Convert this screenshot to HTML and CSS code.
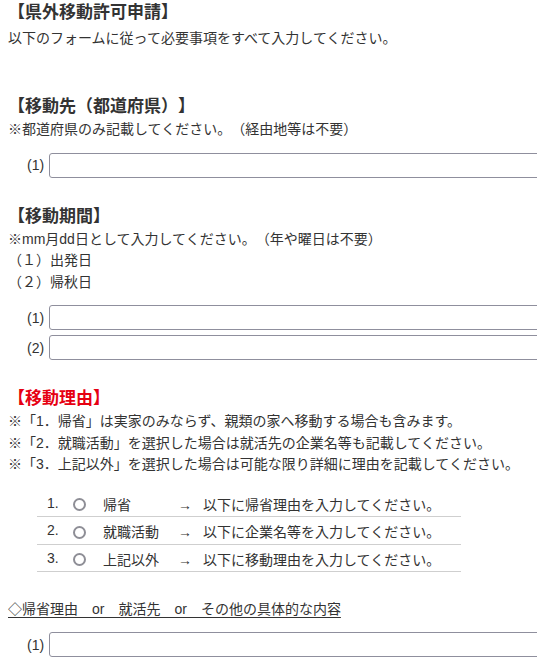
FILE: index.html
```html
<!DOCTYPE html>
<html lang="ja">
<head>
  <meta charset="UTF-8" />
  <meta name="viewport" content="width=device-width, initial-scale=1.0"/>
  <title>県外移動許可申請</title>
  <link rel="stylesheet" href="styles.css">
</head>
<body>
  <h1 class="title">【県外移動許可申請】</h1>
  <p class="lead">以下のフォームに従って必要事項をすべて入力してください。</p>

  <!-- 移動先 -->
  <section class="block block-dest">
    <h2 class="heading">【移動先（都道府県）】</h2>
    <p class="note">※都道府県のみ記載してください。（経由地等は不要）</p>
    <div class="fields">
      <label class="field"><span class="field-no">(1)</span><input type="text" class="text-input"></label>
    </div>
  </section>

  <!-- 移動期間 -->
  <section class="block">
    <h2 class="heading">【移動期間】</h2>
    <p class="note">※mm月dd日として入力してください。（年や曜日は不要）</p>
    <p class="note">（１）出発日</p>
    <p class="note">（２）帰秋日</p>
    <div class="fields">
      <label class="field"><span class="field-no">(1)</span><input type="text" class="text-input"></label>
      <label class="field"><span class="field-no">(2)</span><input type="text" class="text-input"></label>
    </div>
  </section>

  <!-- 移動理由 -->
  <section class="block">
    <h2 class="heading heading-red">【移動理由】</h2>
    <p class="note">※「1．帰省」は実家のみならず、親類の家へ移動する場合も含みます。</p>
    <p class="note">※「2．就職活動」を選択した場合は就活先の企業名等も記載してください。</p>
    <p class="note">※「3．上記以外」を選択した場合は可能な限り詳細に理由を記載してください。</p>

    <ol class="reasons">
      <li class="reason">
        <span class="reason-no">1.</span>
        <input type="radio" name="reason" class="radio">
        <span class="reason-label">帰省</span>
        <span class="arrow">→</span>
        <span class="reason-desc">以下に帰省理由を入力してください。</span>
      </li>
      <li class="reason">
        <span class="reason-no">2.</span>
        <input type="radio" name="reason" class="radio">
        <span class="reason-label">就職活動</span>
        <span class="arrow">→</span>
        <span class="reason-desc">以下に企業名等を入力してください。</span>
      </li>
      <li class="reason">
        <span class="reason-no">3.</span>
        <input type="radio" name="reason" class="radio">
        <span class="reason-label">上記以外</span>
        <span class="arrow">→</span>
        <span class="reason-desc">以下に移動理由を入力してください。</span>
      </li>
    </ol>

    <p class="sub-title">◇帰省理由　or　就活先　or　その他の具体的な内容</p>
    <div class="fields">
      <label class="field"><span class="field-no">(1)</span><input type="text" class="text-input"></label>
    </div>
  </section>
</body>
</html>
```

FILE: styles.css
```css
* {
  box-sizing: border-box;
  margin: 0;
  padding: 0;
}

html {
  overflow: hidden;
}

body {
  font-family: "Liberation Sans", "Noto Sans CJK JP", sans-serif;
  font-size: 14px;
  line-height: 22px;
  color: #333;
  background: #fff;
  padding: 1px 8px 0;
  text-spacing-trim: space-all;
}

.title,
.heading {
  font-size: 17px;
  line-height: 24px;
  font-weight: bold;
}

.lead {
  margin-top: 2px;
}

.block {
  margin-top: 27px;
}

.block-dest {
  margin-top: 46px;
}

.heading-red {
  color: #e60012;
}

.note {
  line-height: 21.5px;
}

/* input rows */
.fields {
  display: flex;
  flex-direction: column;
  gap: 5px;
  margin-top: 12px;
}

.field {
  display: flex;
  align-items: center;
  gap: 5px;
  padding-left: 19px;
}

.field-no {
  width: 19px;
  text-align: right;
}

.text-input {
  width: 500px;
  height: 25px;
  border: 1px solid #8f8f9d;
  border-radius: 3px;
  padding: 2px 6px;
  font: inherit;
  background: #fff;
  flex-shrink: 0;
}

/* reason list */
.reasons {
  list-style: none;
  width: 424px;
  margin: 14px 0 0 29px;
}

.reason {
  display: flex;
  align-items: center;
  height: 27.5px;
  padding-top: 4px;
  border-bottom: 1px solid #cfcfcf;
}

.reason-no {
  width: 36px;
  padding-left: 10px;
  font-family: "Liberation Sans", sans-serif;
  position: relative;
  top: -2px;
}

.radio {
  appearance: none;
  width: 13px;
  height: 13px;
  border: 2px solid #8e8e96;
  border-radius: 50%;
  margin: 0 17px 0 0;
}

.reason-label {
  width: 75px;
}

.arrow {
  width: 25px;
}

.sub-title {
  margin-top: 26px;
  display: inline-block;
  text-decoration: underline;
  text-underline-offset: 3px;
}
```
